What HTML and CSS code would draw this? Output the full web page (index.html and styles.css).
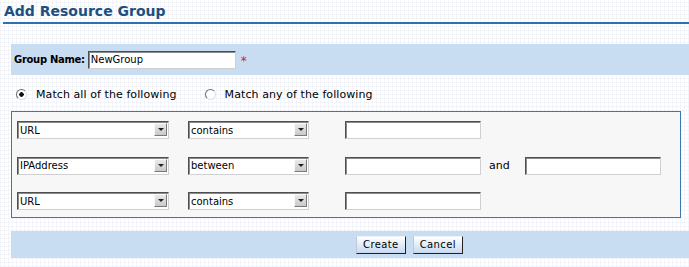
FILE: index.html
```html
<!DOCTYPE html>
<html lang="en">
<head>
    <meta charset="UTF-8">
    <title>Add Resource Group</title>
    <link rel="stylesheet" href="styles.css">
</head>
<body>
    <div class="page">
        <h2 class="title">Add Resource Group</h2>

        <!-- group name -->
        <div class="bar name-bar">
            <label for="groupName">Group Name:</label>
            <input type="text" id="groupName" class="field name-field" value="NewGroup">
            <span class="required">*</span>
        </div>

        <!-- match mode -->
        <div class="match-row">
            <label class="radio"><input type="radio" name="match" checked> Match all of the following</label>
            <label class="radio"><input type="radio" name="match"> Match any of the following</label>
        </div>

        <!-- conditions -->
        <div class="rules">
            <div class="rule">
                <span class="select wide"><select><option>URL</option><option>IPAddress</option></select><span class="arrow"></span></span>
                <span class="select narrow"><select><option>contains</option><option>between</option></select><span class="arrow"></span></span>
                <input type="text" class="field value">
            </div>
            <div class="rule">
                <span class="select wide"><select><option>IPAddress</option><option>URL</option></select><span class="arrow"></span></span>
                <span class="select narrow"><select><option>between</option><option>contains</option></select><span class="arrow"></span></span>
                <input type="text" class="field value">
                <span class="and">and</span>
                <input type="text" class="field value">
            </div>
            <div class="rule">
                <span class="select wide"><select><option>URL</option><option>IPAddress</option></select><span class="arrow"></span></span>
                <span class="select narrow"><select><option>contains</option><option>between</option></select><span class="arrow"></span></span>
                <input type="text" class="field value">
            </div>
        </div>

        <div class="bar button-bar">
            <button>Create</button>
            <button>Cancel</button>
        </div>
    </div>
</body>
</html>
```

FILE: styles.css
```css
body {
    margin: 0;
    padding: 0;
    font-family: 'DejaVu Sans', Verdana, sans-serif;
    font-size: 10px;
    color: #000;
    background-color: #fff;
    background-image:
        repeating-linear-gradient(0deg, rgba(225, 228, 240, 0.35) 0 1px, transparent 1px 4px),
        repeating-linear-gradient(90deg, rgba(225, 228, 240, 0.35) 0 1px, transparent 1px 4px);
}
.page {
    width: 689px;
    height: 267px;
    overflow: hidden;
}
.title {
    margin: 0 0 0 3px;
    padding: 3px 0 0 1px;
    height: 19px;
    font-size: 14px;
    font-weight: bold;
    color: #1d4f80;
    border-bottom: 2px solid #2e70b4;
}
.bar {
    background: #c8ddf2;
    margin-left: 11px;
}
.name-bar {
    margin-top: 20px;
    height: 31px;
    display: flex;
    align-items: center;
    padding-left: 3px;
}
.name-bar label {
    font-weight: bold;
    font-size: 10px;
    letter-spacing: -0.3px;
    margin-right: 3px;
}
.field {
    box-sizing: border-box;
    height: 18px;
    margin: 0;
    padding: 0 2px;
    font-family: 'DejaVu Sans', Verdana, sans-serif;
    font-size: 10px;
    background: #fff;
    border: 1px solid;
    border-color: #4f4f4f #d0d0d0 #d0d0d0 #4f4f4f;
    box-shadow: inset 1px 1px 0 #8a8a8a;
    outline: none;
}
.name-field {
    width: 148px;
}
.required {
    color: #c42a2a;
    font-size: 12px;
    margin-left: 5px;
    margin-top: 2px;
}
.match-row {
    display: flex;
    align-items: center;
    height: 33px;
    padding: 3px 0 0 16px;
    font-size: 11px;
    letter-spacing: 0.08px;
}
.radio {
    display: flex;
    align-items: center;
    margin-right: 28px;
}
.radio input {
    appearance: none;
    -webkit-appearance: none;
    margin: 0 9px 0 0;
    width: 11px;
    height: 11px;
    border: 1px solid;
    border-color: #6e6e6e #e0e0e0 #e0e0e0 #6e6e6e;
    border-radius: 50%;
    background: #fff;
}
.radio input:checked {
    background: radial-gradient(circle, #111 0 2px, #fff 2.5px);
}
.rules {
    margin-left: 11px;
    width: 668px;
    background: #f7f7f7;
    border: 1px solid #3a78b4;
    padding-top: 9px;
    height: 96px;
}
.rule {
    display: flex;
    align-items: center;
    height: 18px;
    margin-bottom: 17.5px;
    padding-left: 5px;
}
.select {
    position: relative;
    display: inline-block;
    height: 18px;
    margin-right: 19px;
}
.select.wide {
    width: 152px;
}
.select.narrow {
    width: 121px;
    margin-right: 36px;
}
.select select {
    appearance: none;
    -webkit-appearance: none;
    box-sizing: border-box;
    width: 100%;
    height: 18px;
    margin: 0;
    padding: 0 2px;
    font-family: 'DejaVu Sans', Verdana, sans-serif;
    font-size: 10px;
    color: #000;
    background: #fff;
    border: 1px solid;
    border-color: #4f4f4f #d0d0d0 #d0d0d0 #4f4f4f;
    box-shadow: inset 1px 1px 0 #8a8a8a;
    border-radius: 0;
    outline: none;
}
.arrow {
    position: absolute;
    right: 2px;
    top: 2px;
    width: 13px;
    height: 13px;
    box-sizing: border-box;
    background: linear-gradient(#e9e9e9, #c9c9c9);
    border: 1px solid;
    border-color: #fafafa #7a7a7a #7a7a7a #fafafa;
    pointer-events: none;
}
.arrow::after {
    content: "";
    position: absolute;
    left: 3px;
    top: 4px;
    border-left: 3px solid transparent;
    border-right: 3px solid transparent;
    border-top: 3px solid #222;
}
.value {
    width: 136px;
}
.and {
    font-size: 11px;
    margin: 0 15px 0 8px;
}
.button-bar {
    margin-top: 13px;
    height: 27px;
    display: flex;
    align-items: center;
    padding-left: 345px;
}
button {
    height: 18px;
    margin-right: 7px;
    padding: 0 6px;
    font-family: 'DejaVu Sans', Verdana, sans-serif;
    font-size: 10px;
    letter-spacing: 0.4px;
    color: #000;
    background: linear-gradient(#ffffff, #dde8f6 60%, #c7d8ef);
    border: 1px solid;
    border-color: #eef3fa #202020 #202020 #c0c8d4;
    border-radius: 0;
    cursor: pointer;
}
```
